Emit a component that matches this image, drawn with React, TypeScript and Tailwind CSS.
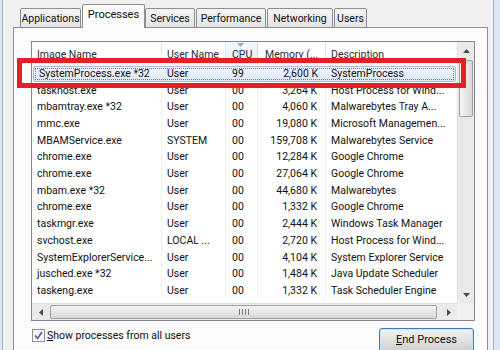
import React from "react";

const rows: string[][] = [
  ["SystemProcess.exe *32", "User", "99", "2,600 K", "SystemProcess"],
  ["taskhost.exe", "User", "00", "3,264 K", "Host Process for Wind..."],
  ["mbamtray.exe *32", "User", "00", "4,060 K", "Malwarebytes Tray A..."],
  ["mmc.exe", "User", "00", "19,080 K", "Microsoft Managemen..."],
  ["MBAMService.exe", "SYSTEM", "00", "159,708 K", "Malwarebytes Service"],
  ["chrome.exe", "User", "00", "12,284 K", "Google Chrome"],
  ["chrome.exe", "User", "00", "27,064 K", "Google Chrome"],
  ["mbam.exe *32", "User", "00", "44,680 K", "Malwarebytes"],
  ["chrome.exe", "User", "00", "1,332 K", "Google Chrome"],
  ["taskmgr.exe", "User", "00", "2,444 K", "Windows Task Manager"],
  ["svchost.exe", "LOCAL ...", "00", "2,720 K", "Host Process for Wind..."],
  ["SystemExplorerService...", "User", "00", "4,104 K", "System Explorer Service"],
  ["jusched.exe *32", "User", "00", "1,484 K", "Java Update Scheduler"],
  ["taskeng.exe", "User", "00", "1,332 K", "Task Scheduler Engine"],
];

const tabs = [
  { label: "Applications", w: "w-[61px]" },
  { label: "Processes", w: "w-[63px]", active: true },
  { label: "Services", w: "w-[50px]" },
  { label: "Performance", w: "w-[70px]" },
  { label: "Networking", w: "w-[66px]" },
  { label: "Users", w: "w-[33px]" },
];

function Arrow({ dir }: { dir: "up" | "down" | "left" | "right" }) {
  const pts = {
    up: "0,4 7,4 3.5,0",
    down: "0,0 7,0 3.5,4",
    left: "4,0 4,7 0,3.5",
    right: "0,0 0,7 4,3.5",
  }[dir];
  const vertical = dir === "up" || dir === "down";
  return (
    <svg width={vertical ? 7 : 4} height={vertical ? 4 : 7}>
      <polygon points={pts} fill="#4a4a4a" />
    </svg>
  );
}

export default function App() {
  return (
    <div className="w-[500px] h-[350px] overflow-hidden bg-[#f0f0f0] flex relative font-['Roboto',sans-serif] text-[10.5px] text-[#111]">
      {/* window frame left */}
      <div className="w-[3px] shrink-0 bg-[#dce7f3] border-r border-[#a6afbb]" />

      <div className="w-[485px] shrink-0 flex flex-col pl-[10px] pt-[4px]">
        {/* tabs */}
        <div className="h-[24px] flex items-end pl-[7px]">
          {tabs.map((t) =>
            t.active ? (
              <div
                key={t.label}
                className={`${t.w} h-[24px] relative z-10 border border-b-0 border-[#8c8e94] rounded-t-[2px] bg-[#fbfbfb] text-center pt-[2px] text-[11px]`}
              >
                {t.label}
              </div>
            ) : (
              <div
                key={t.label}
                className={`${t.w} h-[20px] mr-px border border-[#8c8e94] rounded-t-[2px] bg-gradient-to-b from-[#f4f4f4] to-[#e5e5e5] text-center pt-[2px]`}
              >
                {t.label}
              </div>
            )
          )}
        </div>

        {/* tab page */}
        <div className="relative w-[475px] flex-1 -mt-px border border-[#8c8e94] bg-[#fbfbfb] pl-[17px] pt-[13px]">
          {/* list view */}
          <div className="w-[444px] h-[280px] border border-[#828790] bg-white flex flex-col">
            <div className="flex-1 flex min-h-0">
              <div className="flex-1 flex flex-col overflow-hidden">
                {/* header */}
                <div className="h-[22px] flex shrink-0 text-[#1e2a3a]">
                  <div className="w-[130px] border-r border-[#e5e5e5] pl-[5px] pt-[5px]">Image Name</div>
                  <div className="w-[64px] border-r border-[#d8e6f2] pl-[5px] pt-[5px]">User Name</div>
                  <div className="w-[32px] relative border-r border-[#c2dbef] bg-gradient-to-b from-[#f3f9fd] to-[#e4f0fa] pl-[6px] pt-[5px]">
                    <svg width="7" height="4" className="absolute left-[11px] top-[1px]">
                      <polygon points="0,0 7,0 3.5,4" fill="#8fb0d8" />
                    </svg>
                    CPU
                  </div>
                  <div className="w-[68px] border-r border-[#e5e5e5] pl-[7px] pt-[5px]">Memory (...</div>
                  <div className="flex-1 pl-[5px] pt-[5px]">Description</div>
                </div>

                {/* rows */}
                <div className="pt-[1.5px]">
                  {rows.map((r, i) => (
                    <div
                      key={i}
                      className={`h-[16.7px] flex items-center relative ${
                        i === 0
                          ? "mx-px rounded-[2px] border border-[#a3bde0] bg-gradient-to-b from-[#f1f6fd] to-[#dce8f7]"
                          : ""
                      }`}
                    >
                      {i === 0 && (
                        <div className="absolute inset-[1px] border border-dotted border-[#6b7a8c]" />
                      )}
                      <div className={`${i === 0 ? "w-[128px]" : "w-[130px] border-r border-[#f0f0f0]"} h-full flex items-center pl-[5px] whitespace-nowrap overflow-hidden`}>
                        {r[0]}
                      </div>
                      <div className={`w-[64px] h-full flex items-center pl-[5px] whitespace-nowrap ${i === 0 ? "" : "border-r border-[#f0f0f0]"}`}>
                        {r[1]}
                      </div>
                      <div className={`w-[32px] h-full flex items-center pl-[6px] ${i === 0 ? "" : "border-r border-[#f0f0f0]"}`}>
                        {r[2]}
                      </div>
                      <div className={`w-[68px] h-full flex items-center justify-end pr-[8px] whitespace-nowrap ${i === 0 ? "" : "border-r border-[#f0f0f0]"}`}>
                        {r[3]}
                      </div>
                      <div className="flex-1 h-full flex items-center pl-[5px] whitespace-nowrap overflow-hidden">
                        {r[4]}
                      </div>
                    </div>
                  ))}
                </div>
              </div>

              {/* vertical scrollbar */}
              <div className="w-[17px] shrink-0 flex flex-col bg-[#eaeaea] border-l border-[#e0e0e0]">
                <div className="h-[17px] flex items-center justify-center">
                  <Arrow dir="up" />
                </div>
                <div className="flex-1 px-[1px]">
                  <div className="h-[57px] mt-px rounded-[2px] border border-[#a0a0a0] bg-gradient-to-r from-[#f5f5f5] to-[#d9d9d9]" />
                </div>
                <div className="h-[17px] flex items-center justify-center">
                  <Arrow dir="down" />
                </div>
              </div>
            </div>

            {/* horizontal scrollbar */}
            <div className="h-[17px] shrink-0 flex">
              <div className="flex-1 flex bg-[#eaeaea] border-t border-[#e0e0e0]">
                <div className="w-[17px] flex items-center justify-center">
                  <Arrow dir="left" />
                </div>
                <div className="flex-1 py-[1px] pl-[1px] pr-[3px]">
                  <div className="h-full rounded-[2px] border border-[#a0a0a0] bg-gradient-to-b from-[#f5f5f5] to-[#d9d9d9] flex items-center justify-center gap-[2px]">
                    <div className="w-px h-[6px] bg-[#777]" />
                    <div className="w-px h-[6px] bg-[#777]" />
                    <div className="w-px h-[6px] bg-[#777]" />
                    <div className="w-px h-[6px] bg-[#777]" />
                  </div>
                </div>
                <div className="w-[17px] flex items-center justify-center">
                  <Arrow dir="right" />
                </div>
              </div>
              <div className="w-[17px] bg-[#f0f0f0]" />
            </div>
          </div>

          {/* bottom controls */}
          <div className="w-[444px] flex justify-between items-start mt-[7px]">
            <div className="flex items-center gap-[2px] pl-px">
              <div className="w-[13px] h-[13px] border border-[#8e8f8f] bg-gradient-to-br from-[#f0f0f0] to-[#ffffff] flex items-center justify-center">
                <svg width="9" height="9" viewBox="0 0 9 9">
                  <polyline points="1,4.5 3.5,7.5 8,1" fill="none" stroke="#4a5f97" strokeWidth="1.6" />
                </svg>
              </div>
              <span className="text-[10.5px]">
                <span className="underline">S</span>how processes from all users
              </span>
            </div>
            <div className="w-[95px] h-[24px] mr-px rounded-[3px] border border-[#3c7fb1] shadow-[inset_0_0_0_1px_#bfe4fb] bg-gradient-to-b from-[#f2f2f2] to-[#d0d0d0] flex items-center justify-center text-[11px]">
              <span>
                <span className="underline">E</span>nd Process
              </span>
            </div>
          </div>
        </div>
      </div>

      <div className="flex-1" />
      {/* window frame right */}
      <div className="w-[7px] shrink-0 bg-[#dce7f3] border-l border-[#a6afbb]" />

      {/* red annotation */}
      <div className="absolute left-[17px] top-[58px] w-[449px] h-[30px] border-[5px] border-[#e41f26]" />
    </div>
  );
}
